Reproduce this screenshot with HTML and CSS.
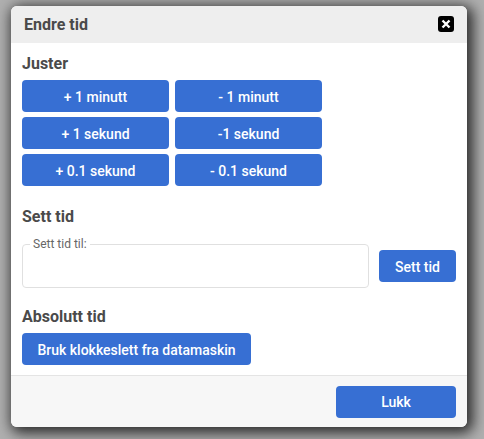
FILE: index.html
```html
<!DOCTYPE html>
<html lang="no">
<head>
    <meta charset="UTF-8">
    <meta name="viewport" content="width=device-width, initial-scale=1.0">
    <title>Endre tid</title>
    <link rel="stylesheet" href="styles.css">
</head>
<body>
    <div class="modal">
        <div class="modal-header">
            <span class="modal-title">Endre tid</span>
            <button class="close-button" type="button" aria-label="Lukk">
                <svg width="10" height="10" viewBox="0 0 10 10">
                    <path d="M1.5 1.5 8.5 8.5M8.5 1.5 1.5 8.5" stroke="#fff" stroke-width="2.4" fill="none"/>
                </svg>
            </button>
        </div>
        <div class="modal-body">
            <h2 class="section-title section-adjust">Juster</h2>
            <div class="adjust-grid">
                <button class="btn" type="button">+ 1 minutt</button>
                <button class="btn" type="button">- 1 minutt</button>
                <button class="btn" type="button">+ 1 sekund</button>
                <button class="btn" type="button">-1 sekund</button>
                <button class="btn" type="button">+ 0.1 sekund</button>
                <button class="btn" type="button">- 0.1 sekund</button>
            </div>

            <h2 class="section-title section-set">Sett tid</h2>
            <div class="set-row">
                <fieldset class="time-field">
                    <legend>Sett tid til:</legend>
                    <input type="text" name="tid">
                </fieldset>
                <button class="btn btn-set" type="button">Sett tid</button>
            </div>

            <h2 class="section-title section-abs">Absolutt tid</h2>
            <button class="btn btn-abs" type="button">Bruk klokkeslett fra datamaskin</button>
        </div>
        <div class="modal-footer">
            <button class="btn btn-close" type="button">Lukk</button>
        </div>
    </div>
</body>
</html>
```

FILE: styles.css
```css
html, body {
    height: 100%;
}

body {
    margin: 0;
    padding: 6px 17px 12px 11px;
    box-sizing: border-box;
    background: #b0b0b0;
    font-family: Roboto, "Liberation Sans", sans-serif;
    overflow: hidden;
}

.modal {
    width: 456px;
    height: 421px;
    display: flex;
    flex-direction: column;
    background: #fff;
    border-radius: 6px;
    box-shadow: 3px 3px 14px 3px #2a2a2a;
    overflow: hidden;
}

.modal-header {
    height: 37px;
    flex: none;
    display: flex;
    align-items: center;
    justify-content: space-between;
    padding: 0 13px;
    background: #eee;
}

.modal-title {
    font-size: 16px;
    font-weight: 700;
    color: #4a4a4a;
}

.close-button {
    width: 16px;
    height: 16px;
    padding: 0;
    margin-top: -2px;
    display: flex;
    align-items: center;
    justify-content: center;
    background: #000;
    border: none;
    border-radius: 3px;
}

.modal-body {
    flex: 1;
    padding: 11px 11px 0;
}

.section-title {
    margin: 0;
    height: 19px;
    line-height: 19px;
    font-size: 16px;
    font-weight: 700;
    color: #4a4a4a;
}

.section-adjust {
    margin-bottom: 7px;
}

.adjust-grid {
    display: grid;
    grid-template-columns: 147px 147px;
    grid-auto-rows: 32px;
    gap: 5px 6px;
}

.btn {
    height: 32px;
    padding: 1px 0 0;
    background: #376fd3;
    border: none;
    border-radius: 4px;
    color: #fff;
    font-family: inherit;
    font-size: 14px;
    font-weight: 500;
}

.section-set {
    margin: 21px 0 11px;
}

.set-row {
    display: flex;
    align-items: flex-end;
    gap: 10px;
}

.time-field {
    width: 347px;
    height: 51px;
    margin: 0;
    padding: 0 7px;
    box-sizing: border-box;
    border: 1px solid #e0e0e0;
    border-radius: 4px;
}

.time-field legend {
    padding: 0 3px;
    font-size: 12px;
    color: #666;
}

.time-field input {
    width: 100%;
    border: none;
    outline: none;
}

.btn-set {
    width: 77px;
    margin-bottom: 6px;
}

.section-abs {
    margin: 19px 0 7px;
}

.btn-abs {
    width: 229px;
}

.modal-footer {
    height: 52px;
    flex: none;
    display: flex;
    align-items: center;
    justify-content: flex-end;
    padding: 0 11px;
    box-sizing: border-box;
    background: #f7f7f7;
    border-top: 1px solid #e4e4e4;
}

.btn-close {
    width: 120px;
}
```
